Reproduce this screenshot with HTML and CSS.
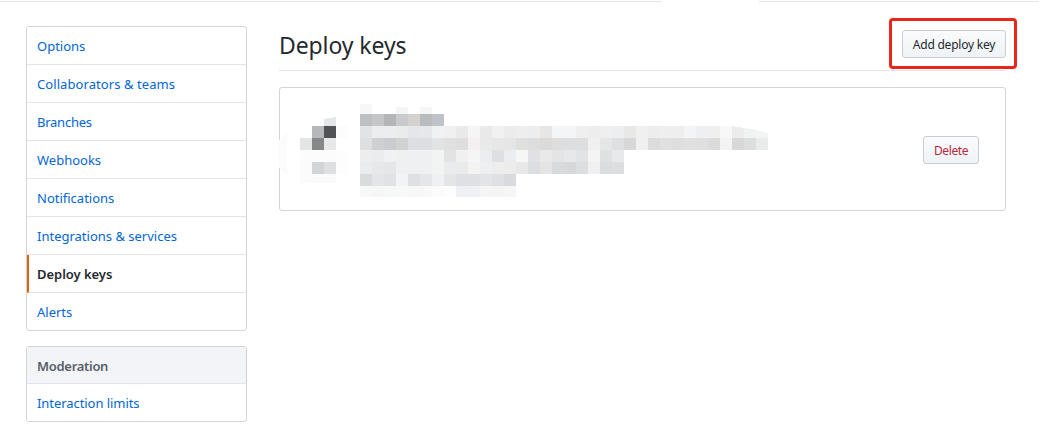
FILE: index.html
```
<!DOCTYPE html>
<html lang="en">
<head>
<meta charset="utf-8">
<title>Deploy keys</title>
<link rel="stylesheet" href="styles.css">
</head>
<body>
<div class="tabline"><span class="tabline-left"></span><span class="tabline-right"></span></div>
<div class="page">
  <aside class="sidebar">
    <nav class="menu">
      <a class="item">Options</a>
      <a class="item wide">Collaborators &amp; teams</a>
      <a class="item narrow">Branches</a>
      <a class="item">Webhooks</a>
      <a class="item">Notifications</a>
      <a class="item">Integrations &amp; services</a>
      <a class="item selected">Deploy keys</a>
      <a class="item">Alerts</a>
    </nav>
    <nav class="menu">
      <div class="menu-heading">Moderation</div>
      <a class="item snug">Interaction limits</a>
    </nav>
  </aside>
  <main class="content">
    <header class="head">
      <h1 class="title">Deploy keys</h1>
      <div class="highlight"><button class="btn btn-add">Add deploy key</button></div>
    </header>
    <section class="key">
      <svg class="mosaic" width="492" height="102" viewBox="278 100 492 102" shape-rendering="crispEdges"></svg>
      <button class="btn btn-delete">Delete</button>
    </section>
  </main>
</div>
<script src="mosaic.js"></script>
</body>
</html>
```
FILE: styles.css
```
* { box-sizing: border-box; }
body { margin: 0; height: 442px; overflow: hidden; background: #fff; color: #24292e; font-family: "Noto Sans", "Open Sans", sans-serif; font-size: 13px; }
.tabline { display: flex; justify-content: space-between; height: 2px; padding-top: 1px; }
.tabline span { height: 1px; background: #e1e4e8; }
.tabline-left { width: 662px; }
.tabline-right { width: 280px; }
.page { display: flex; gap: 32px; padding: 24px 33px 0 26px; }
.sidebar { width: 221px; display: flex; flex-direction: column; gap: 15px; }
.menu { border: 1px solid #d1d5da; border-radius: 3px; overflow: hidden; }
.item { display: flex; align-items: center; height: 38px; padding: 1px 10px 0; border-bottom: 1px solid #e1e4e8; color: #0366d6; white-space: nowrap; }
.item:last-child { border-bottom: 0; height: 37px; }
.wide { letter-spacing: 0.08px; }
.narrow { letter-spacing: -0.25px; }
.snug { letter-spacing: -0.06px; }
.selected { color: #24292e; font-weight: 600; border-left: 2px solid #e36209; padding-left: 8px; letter-spacing: -0.04px; }
.menu-heading { display: flex; align-items: center; height: 37px; padding: 2px 10px 0; background: #f3f4f8; border-bottom: 1px solid #e1e4e8; color: #586069; font-weight: 600; letter-spacing: -0.3px; }
.content { flex: 1; }
.head { display: flex; justify-content: space-between; height: 45px; border-bottom: 1px solid #e1e4e8; }
.title { margin: 2px 0 0; font-size: 23px; line-height: 34px; font-weight: 400; letter-spacing: -0.1px; white-space: nowrap; }
.highlight { display: flex; align-items: center; justify-content: center; width: 128px; height: 51px; margin: -8px -11px 0 0; padding: 1px 0 0 2px; border: 3px solid #ea261c; border-radius: 4px; position: relative; }
.btn { font-family: inherit; font-size: 12px; height: 28px; padding: 0; border: 1px solid #c9cdd1; border-radius: 3px; background: linear-gradient(#fafbfc, #eff3f6); color: #24292e; letter-spacing: -0.22px; white-space: nowrap; }
.btn-add { width: 104px; }
.btn-delete { width: 56px; color: #b8283a; letter-spacing: -0.4px; }
.key { display: flex; align-items: center; justify-content: space-between; height: 124px; margin-top: 16px; padding: 2px 26px 0 0; border: 1px solid #d1d5da; border-radius: 3px; }
.mosaic { display: block; margin: 2px 0 0 -2px; }
```
FILE: mosaic.js
```
// Pixelated block: 12px cells, each row is [x, y, height, colours]
const rows = [
  [360, 104, 10, "f7f7f7"],
  [396, 107, 7, "f5f5f5"],
  [420, 107, 7, "f6f6f6"],
  [360, 114, 12, "bdbfc0 c4c6c7 b3b5b6 c8cacd d5d1ce b9bcbf bfc2c7"],
  [360, 126, 12, "e2e3e4 ebedef ebedef ebebec e5e6e9 e5e7eb f0f1f2 f0f0f1 e9e9e8 f5f5f5 e9e9e9 f1f1f0 ececec eeeeee ebedef e7e6e5 f3f6f8 f3f5f7 efefef ededed efefef eceff1 e8e8e7 f0f0ef ededed eeeeee eeeeee f2f4f6 edeff2 efefef f8f8f8"],
  [360, 138, 12, "dddfe0 cfd0d2 cbccd1 cfd1d3 dcdee3 dcdee2 e1e3e5 e0e0e0 dedede f4f0f0 e8eaea e7e7e7 e5e5e5 dfdfde dddddd dadada dddddd dddedf dcdedf f0f0f0 e5e7e7 dddfe1 d8d8d8 f0f0f0 dcdcdc e0e0e0 dedede e0e0e0 dfdfdf dbdbdb f3f3f3 d8d8d8 dddede eaecec"],
  [360, 150, 12, "ededee ebeced f0f1f2 f0f0f1 eef0f2 eef0f2 f2f3f3 e2e3e3 f0f0f0 f4f5f5 ecedef dedfe1 ebeef1 f6f6f6 dfe1e4 e9e9e9 e3e4e5 e6e8e9 e1e3e4 f3f4f3 dfe0e1 e7e9eb"],
  [360, 162, 12, "e9ebec e7e8ea e4e6e8 eff0f2 eef0f2 eef0f2 f2f3f3 eaebec e9eaea f3f3f3 eeeff0 ededee ececed e8e8e9 dbdde1 e4e4e4 d9dadb d6d8d9 dcdee0 f0f0f0 dbdcdd dddedf"],
  [360, 174, 12, "dadbdc e4e5e7 e0e2e4 f2f3f4 dfe0e1 e5e6e8 eef0f1 e4e5e7 dfe0e4 dfe0e4 e2e4e5 dee0e4 d8dadd"],
  [360, 186, 11, "f7f8f8 f6f6f6 f6f7f7 f7f8f8 f7f7f7 f8f8f8 fbfbfb fdfdfd eef0f3 f0f1f4 f5f5f5 f4f4f4 f6f6f6"],
  [312, 126, 12, "b5b7ba 505256 fcfcfc"],
  [300, 138, 12, "e3e5e5 858788 e8e8e9"],
  [300, 150, 12, "fcfcfc fcfcfc fcfcfc fdfdfd"],
  [300, 162, 12, "fbfbfb d3d4d5 dedfe1 fdfdfd"],
  [300, 174, 9, "fbfbfb fafafa fafafa"]
];
const svg = document.querySelector(".mosaic");
function shape(d, fill) {
  const p = document.createElementNS("http://www.w3.org/2000/svg", "path");
  p.setAttribute("d", d);
  p.setAttribute("fill", fill);
  svg.appendChild(p);
}
rows.forEach(([x, y, h, colours]) => {
  colours.split(" ").forEach((c, i) => shape(`M${x + i * 12} ${y}h12v${h}h-12z`, "#" + c));
});
shape("M732 126l12 2v10h-12z", "#ececec");
shape("M744 128l12 2v8h-12z", "#f1f3f3");
shape("M756 130l12 3v5h-12z", "#f2f5f4");
shape("M324 119l12-2v9h-12z", "#e4e7e7");
shape("M278 145l2-6 7-7v43l-7-6-2-6z", "#fbfbfb");
```
